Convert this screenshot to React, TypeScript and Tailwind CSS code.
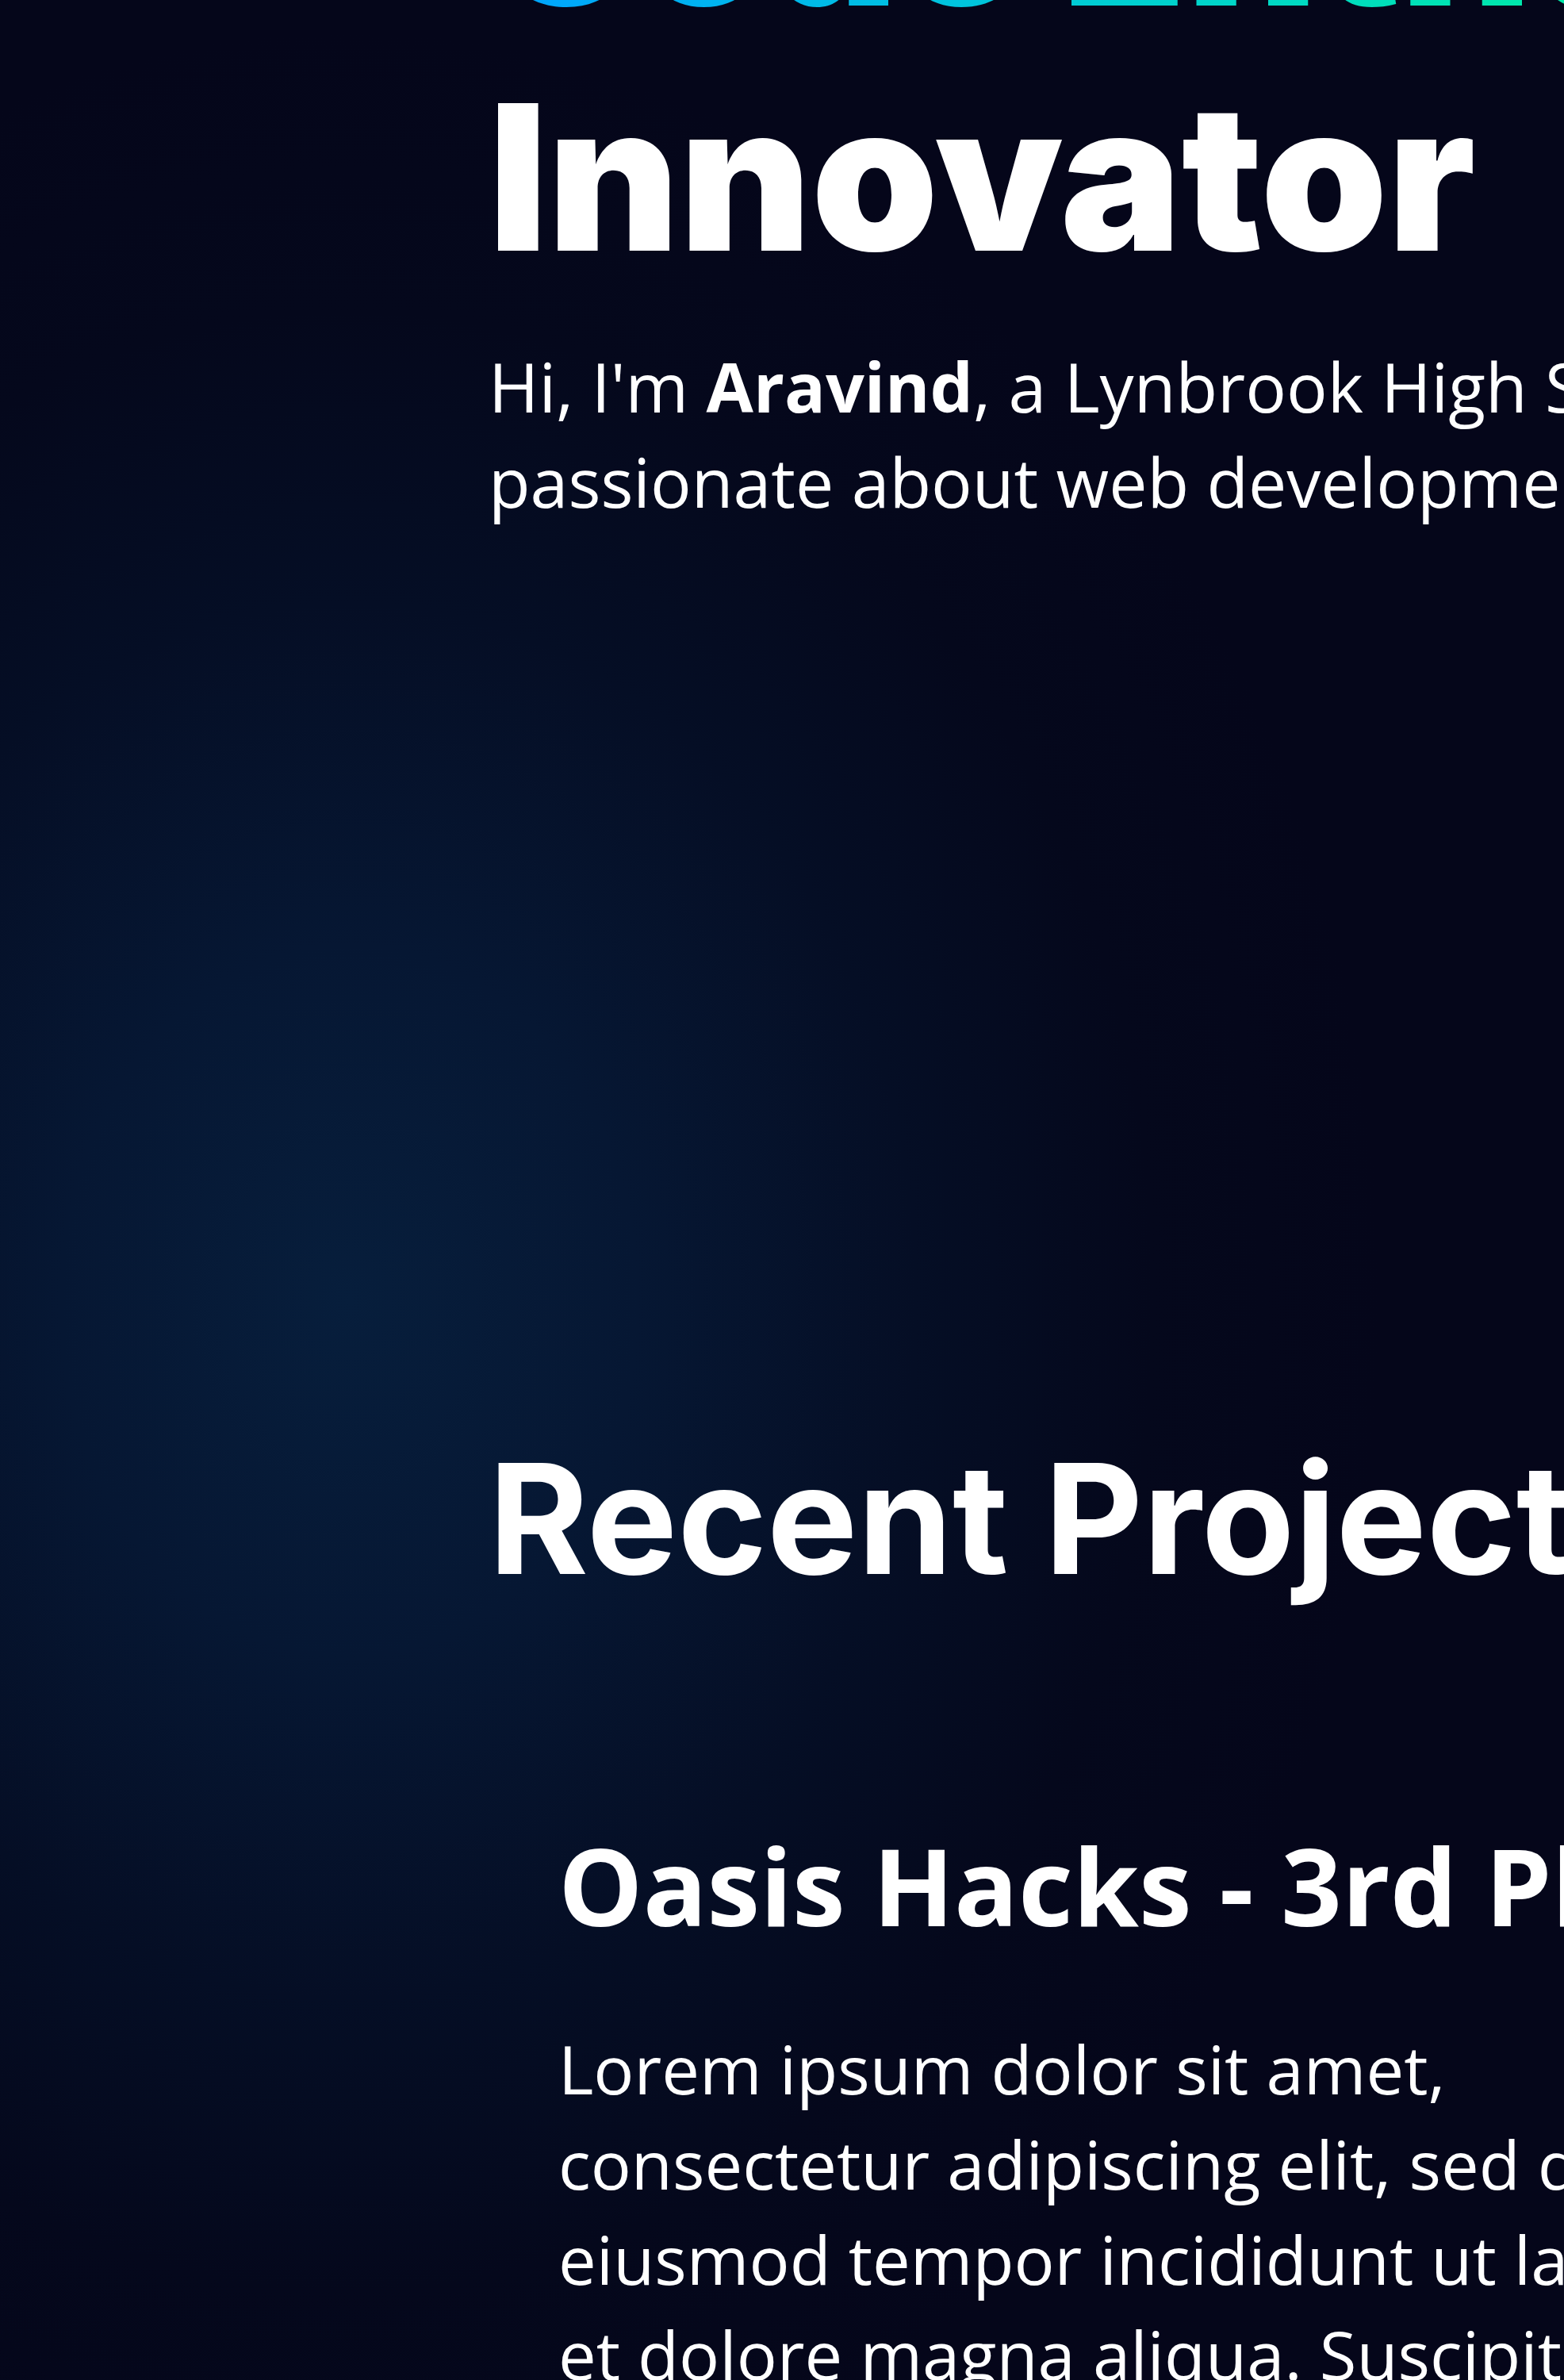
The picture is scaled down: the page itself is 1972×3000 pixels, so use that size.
export default function App() {
  return (
    <div className="min-h-screen overflow-hidden bg-[#05061a] bg-[radial-gradient(ellipse_1300px_1600px_at_440px_1640px,#071e3c_0%,#061733_28%,#050e25_55%,#05081c_78%,#05061a_100%)] text-white">
      <main className="pl-[616px] pb-[200px]">
        {/* Hero */}
        <section>
          <h1 className="mt-[-240px] font-['Inter',sans-serif] text-[256px] font-black leading-[309px]">
            <span className="block whitespace-nowrap bg-linear-to-r from-[#00a2ff] to-[#00eaa8] bg-clip-text text-transparent">
              Code Enthusiast
            </span>
            <span className="block whitespace-nowrap">Innovator</span>
          </h1>
          <p className="mt-[49px] whitespace-nowrap font-['Open_Sans',sans-serif] text-[86px] leading-[120px]">
            Hi, I'm <strong className="font-bold">Aravind</strong>, a Lynbrook High School student
            <br />
            passionate about web development, design and building things.
          </p>
        </section>

        {/* Projects */}
        <section className="mt-[1131px]">
          <h2 className="whitespace-nowrap font-['Inter',sans-serif] text-[192px] font-bold leading-[232px]">
            Recent Projects
          </h2>

          <div className="mt-[266px] pl-[88px]">
            <h3 className="whitespace-nowrap font-['Open_Sans',sans-serif] text-[134px] font-bold leading-[160px]">
              Oasis Hacks - 3rd Place
            </h3>
            <p className="mt-[91px] whitespace-nowrap font-['Open_Sans',sans-serif] text-[85px] leading-[120px]">
              Lorem ipsum dolor sit amet,
              <br />
              consectetur adipiscing elit, sed do
              <br />
              eiusmod tempor incididunt ut labore
              <br />
              et dolore magna aliqua. Suscipit tellus mauris a diam.
            </p>
          </div>
        </section>
      </main>
    </div>
  );
}
